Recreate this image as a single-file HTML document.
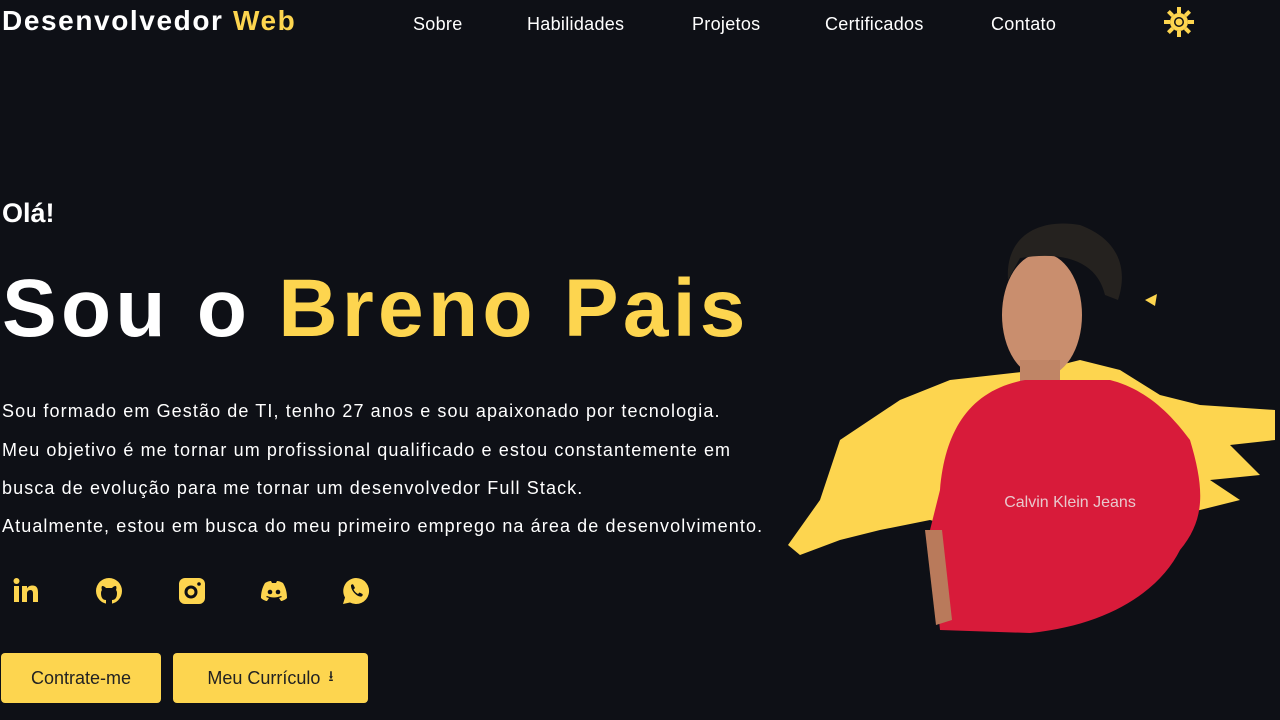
<!DOCTYPE html>
<html><head><meta charset="utf-8"><style>
*{margin:0;padding:0;box-sizing:border-box}
body{width:1280px;height:720px;background:#0e1016;color:#fff;font-family:"Liberation Sans",sans-serif;overflow:hidden;position:relative}
.logo{position:absolute;left:2px;top:5px;font-size:28px;font-weight:bold;letter-spacing:1.6px}
.logo span{color:#fdd54f}
nav a{position:absolute;top:14px;font-size:18px;color:#fff;text-decoration:none;letter-spacing:0.3px}
.hello{position:absolute;left:2px;top:198px;font-size:27px;font-weight:bold}
h1{position:absolute;left:2px;top:262px;font-size:82px;font-weight:bold;letter-spacing:4.3px;white-space:nowrap}
h1 span{color:#fdd54f}
.p{position:absolute;left:2px;font-size:18px;letter-spacing:1.1px;white-space:nowrap}
.ic{position:absolute;top:576px}
.btn{position:absolute;top:653px;height:50px;background:#fdd54f;border-radius:4px;color:#222;font-size:18px;display:flex;align-items:center;justify-content:center}
</style></head><body>
<div class="logo">Desenvolvedor <span>Web</span></div>
<nav><a style="left:413px">Sobre</a><a style="left:527px">Habilidades</a><a style="left:692px">Projetos</a><a style="left:825px">Certificados</a><a style="left:991px">Contato</a></nav>
<svg style="position:absolute;left:1163px;top:6px" width="32" height="32" viewBox="0 0 32 32"><g fill="#fdd54f"><circle cx="16" cy="16" r="9"/><g id="r"><rect x="14" y="1" width="4" height="6"/><rect x="14" y="25" width="4" height="6"/></g><use href="#r" transform="rotate(45 16 16)"/><use href="#r" transform="rotate(90 16 16)"/><use href="#r" transform="rotate(135 16 16)"/></g><circle cx="16" cy="16" r="5" fill="#0e1016"/><circle cx="16" cy="16" r="3.5" fill="#fdd54f"/></svg>
<div class="hello">Olá!</div>
<h1>Sou o <span>Breno Pais</span></h1>
<div class="p" style="top:401px">Sou formado em Gestão de TI, tenho 27 anos e sou apaixonado por tecnologia.</div>
<div class="p" style="top:440px">Meu objetivo é me tornar um profissional qualificado e estou constantemente em</div>
<div class="p" style="top:478px">busca de evolução para me tornar um desenvolvedor Full Stack.</div>
<div class="p" style="top:516px">Atualmente, estou em busca do meu primeiro emprego na área de desenvolvimento.</div>
<svg class="ic" style="left:12px" width="30" height="30" viewBox="0 0 30 30"><g fill="#fdd54f"><rect x="2" y="10" width="5" height="16"/><circle cx="4.5" cy="5" r="3"/><path d="M10 10h5v2.5c1-2 3-3 5.5-3 4 0 5.5 2.5 5.5 7V26h-5v-8.5c0-2-.6-3.5-2.6-3.5S15 15.5 15 17.5V26h-5z"/></g></svg>
<svg class="ic" style="left:95px" width="30" height="30" viewBox="0 0 30 30"><circle cx="14" cy="15" r="13" fill="#fdd54f"/><path d="M11 28v-4c-3 0-5-2-5-7 0-2 1-3 1-3s-1-2 0-4c2 0 3 1 4 2h6c1-1 2-2 4-2 1 2 0 4 0 4s1 1 1 3c0 5-2 7-5 7v4z" fill="#0e1016"/></svg>
<svg class="ic" style="left:178px" width="30" height="30" viewBox="0 0 30 30"><rect x="1" y="2" width="26" height="26" rx="6" fill="#fdd54f"/><circle cx="13" cy="16" r="5" fill="none" stroke="#0e1016" stroke-width="3"/><circle cx="21" cy="8" r="1.8" fill="#0e1016"/></svg>
<svg class="ic" style="left:259px" width="30" height="30" viewBox="0 0 30 30"><path d="M6 7c3-2 6-2 6-2l1 2h4l1-2s3 0 6 2c3 5 4 10 4 15-2 2-5 3-6 3l-2-3 3-1-1-1c-5 2-9 2-14 0l-1 1 3 1-2 3c-1 0-4-1-6-3 0-5 1-10 4-15z" fill="#fdd54f"/><circle cx="11" cy="16" r="2.3" fill="#0e1016"/><circle cx="19" cy="16" r="2.3" fill="#0e1016"/></svg>
<svg class="ic" style="left:341px" width="30" height="30" viewBox="0 0 30 30"><path d="M15 2a13 13 0 1 1-6 24.5L2 28l2-6.5A13 13 0 0 1 15 2z" fill="#fdd54f"/><path d="M10 9c1-1 2-1 2.5 0l1.5 3-1.5 1.5c1 2 2.5 3.5 4.5 4.5l1.5-1.5 3 1.5c.5 1 0 2-1 2.5-4 1-11-6-10.5-11.5z" fill="#0e1016"/></svg>
<div class="btn" style="left:1px;width:160px">Contrate-me</div>
<div class="btn" style="left:173px;width:195px">Meu Currículo <span style="margin-left:8px;font-size:15px">⭳</span></div>
<svg style="position:absolute;left:780px;top:200px" width="500" height="450" viewBox="0 0 500 450">
<path d="M8 345 L40 300 L60 240 L120 200 L170 180 L260 170 L300 160 L340 170 L380 195 L420 205 L495 210 L495 240 L450 245 L480 275 L430 280 L460 300 L420 310 L380 320 L310 330 L250 340 L200 335 L150 320 L100 330 L60 340 L20 355z" fill="#fdd54f"/>
<path d="M365 100 l12 -6 l-2 12z" fill="#fdd54f"/>
<ellipse cx="262" cy="115" rx="40" ry="62" fill="#c98e6e"/>
<path d="M228 80 C225 35 260 18 300 25 C340 40 348 70 338 100 L325 95 C318 65 290 50 240 58 Z" fill="#25221f"/>
<rect x="240" y="160" width="40" height="30" fill="#c08566"/>
<path d="M160 290 C165 230 190 190 245 180 L330 180 C370 190 395 220 410 240 C425 290 425 320 400 350 C380 390 330 425 250 433 L160 430 L150 330 Z" fill="#d81b3a"/>
<path d="M145 330 L162 330 L172 420 L156 425z" fill="#b97a5b"/>
<text x="290" y="307" font-size="16" fill="#e8c8cc" text-anchor="middle" font-family="Liberation Sans">Calvin Klein Jeans</text>
</svg>
</body></html>
